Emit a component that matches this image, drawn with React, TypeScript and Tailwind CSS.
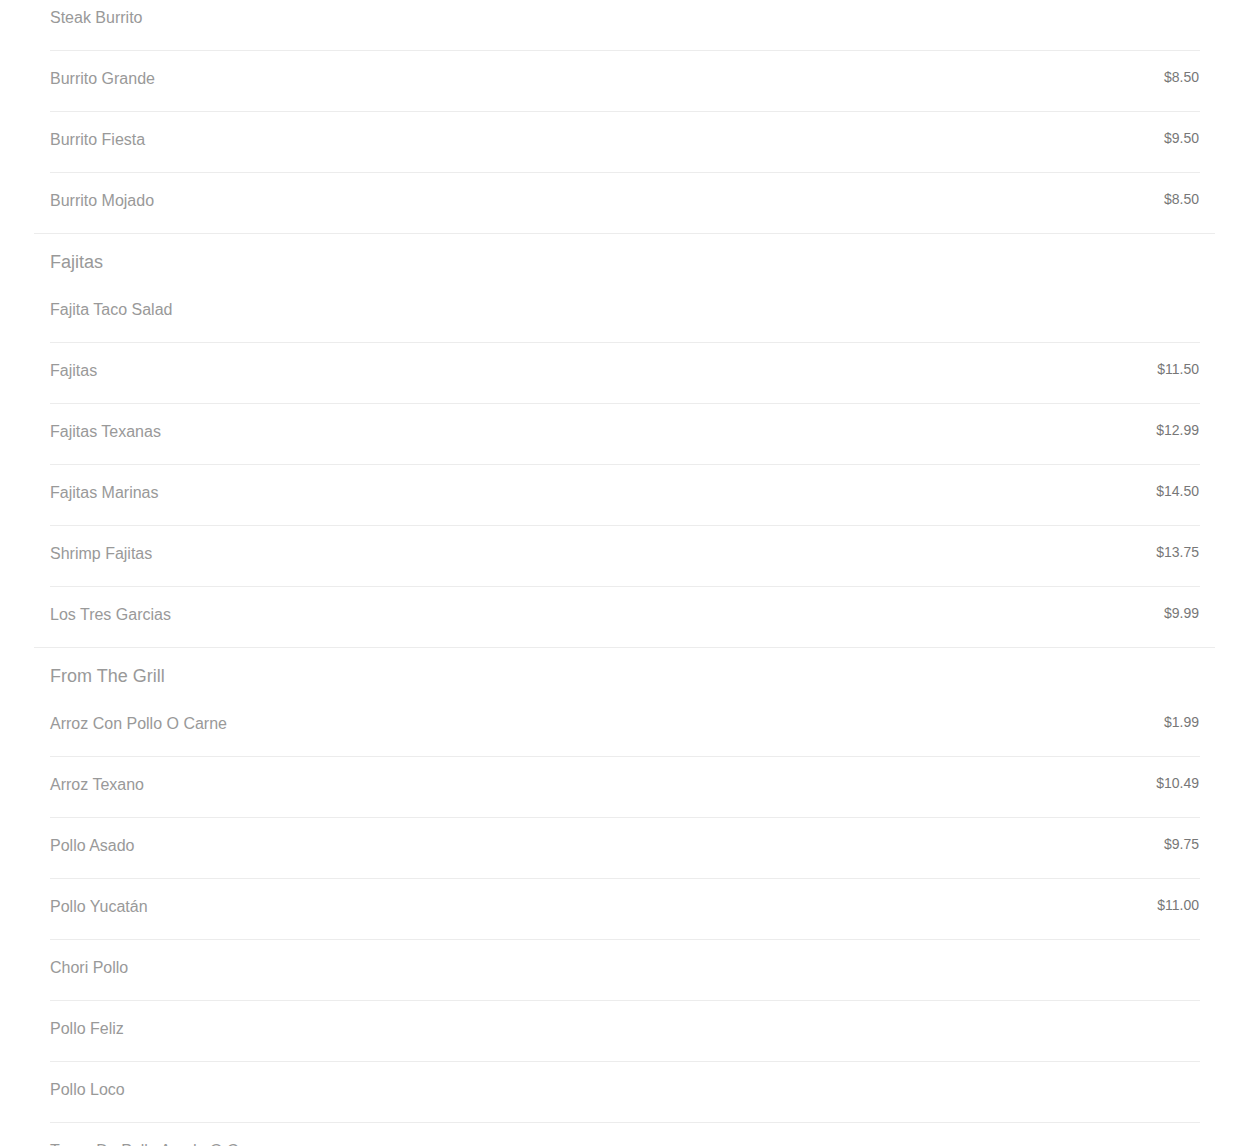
import React from 'react';

interface Item {
    name: string;
    price?: string;
}

interface Section {
    title?: string;
    items: Item[];
}

const sections: Section[] = [
    {
        items: [
            { name: 'Steak Burrito' },
            { name: 'Burrito Grande', price: '$8.50' },
            { name: 'Burrito Fiesta', price: '$9.50' },
            { name: 'Burrito Mojado', price: '$8.50' },
        ],
    },
    {
        title: 'Fajitas',
        items: [
            { name: 'Fajita Taco Salad' },
            { name: 'Fajitas', price: '$11.50' },
            { name: 'Fajitas Texanas', price: '$12.99' },
            { name: 'Fajitas Marinas', price: '$14.50' },
            { name: 'Shrimp Fajitas', price: '$13.75' },
            { name: 'Los Tres Garcias', price: '$9.99' },
        ],
    },
    {
        title: 'From The Grill',
        items: [
            { name: 'Arroz Con Pollo O Carne', price: '$1.99' },
            { name: 'Arroz Texano', price: '$10.49' },
            { name: 'Pollo Asado', price: '$9.75' },
            { name: 'Pollo Yucatán', price: '$11.00' },
            { name: 'Chori Pollo' },
            { name: 'Pollo Feliz' },
            { name: 'Pollo Loco' },
            { name: 'Tacos De Pollo Asado O Carne' },
        ],
    },
];

const App = () => {
    return (
        <div className="bg-white min-h-screen overflow-hidden h-[1146px] font-['Liberation_Sans',Arial,sans-serif]">
            <div className="-mt-[10px]">
                {sections.map((section, i) => (
                    <div key={i} className="ml-[34px] mr-[35px] pl-4 pr-[15px] border-b border-[#ececec]">
                        {section.title && (
                            <div className="h-[48px] pt-[17px]">
                                <h3 className="text-[18px] leading-[22px] text-[#999999]">{section.title}</h3>
                            </div>
                        )}
                        <ul>
                            {section.items.map((item, j) => (
                                <li
                                    key={item.name}
                                    className={
                                        j < section.items.length - 1
                                            ? 'flex justify-between items-start h-[61px] pt-[18px] border-b border-[#ececec]'
                                            : 'flex justify-between items-start h-[60px] pt-[18px]'
                                    }
                                >
                                    <span className="mt-px text-[16px] leading-[18px] text-[#999999]">{item.name}</span>
                                    {item.price && (
                                        <span className="text-[14px] leading-[16px] text-[#777777] mr-px">{item.price}</span>
                                    )}
                                </li>
                            ))}
                        </ul>
                    </div>
                ))}
            </div>
        </div>
    );
};

export default App;
